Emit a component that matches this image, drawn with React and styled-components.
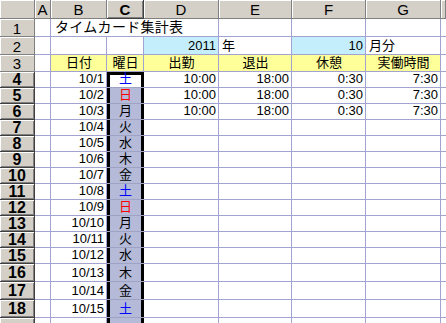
import React from "react";
import styled, { createGlobalStyle, css } from "styled-components";

const Global = createGlobalStyle`
  html, body { margin: 0; padding: 0; background: #fff; }
  body { font-family: "Liberation Sans", "Noto Sans CJK JP", sans-serif; }
`;

const GRID = "#a3a3d2";

const Sheet = styled.div`
  display: grid;
  width: 446px;
  height: 323px;
  overflow: hidden;
  grid-template-columns: 35px 16px 56px 37px 75px 73px 74px 75px 5px;
  grid-template-rows: 19px 18px 18px 17px repeat(12, 16px) repeat(3, 18px) 18px;
  background: #fff;
`;

const headBase = css`
  box-sizing: border-box;
  background: #d4d0c8;
  display: flex;
  align-items: center;
  justify-content: center;
  color: #000;
  font-family: "Liberation Sans", sans-serif;
  overflow: hidden;
`;

const Corner = styled.div`
  ${headBase};
  border-right: 1px solid #808080;
  border-bottom: 1px solid #808080;
  box-shadow: inset 1px 1px 0 #fff;
`;

const ColHead = styled.div`
  ${headBase};
  font-size: 15px;
  font-weight: ${(p) => (p.$active ? 700 : 400)};
  border-right: 1px solid ${(p) => (p.$active ? "#404040" : "#808080")};
  border-bottom: 1px solid ${(p) => (p.$active ? "#404040" : "#808080")};
  box-shadow: ${(p) =>
    p.$active
      ? "inset 1px 1px 0 #fff, inset -1px -1px 0 #808080"
      : "inset 1px 1px 0 #fff"};
  padding-top: 1px;
`;

const RowHead = styled.div`
  ${headBase};
  font-size: ${(p) => (p.$active ? "16px" : "15px")};
  font-weight: ${(p) => (p.$active ? 700 : 400)};
  border-right: 1px solid ${(p) => (p.$active ? "#404040" : "#808080")};
  border-bottom: 1px solid ${(p) => (p.$active ? "#404040" : "#808080")};
  box-shadow: ${(p) =>
    p.$active
      ? "inset 1px 1px 0 #fff, inset -1px -1px 0 #808080"
      : "inset 1px 1px 0 #fff"};
  padding-top: 1px;
`;

const Cell = styled.div`
  box-sizing: border-box;
  display: flex;
  align-items: flex-end;
  justify-content: ${(p) =>
    p.$align === "right" ? "flex-end" : p.$align === "center" ? "center" : "flex-start"};
  padding: 0 2px 1px 3px;
  font-size: 13px;
  line-height: 15px;
  color: ${(p) => p.$color || "#000"};
  background: ${(p) => p.$bg || "#fff"};
  border-right: 1px solid ${GRID};
  border-bottom: 1px solid ${GRID};
  white-space: nowrap;
  grid-column: ${(p) => (p.$span ? `span ${p.$span}` : "auto")};
  ${(p) =>
    p.$sel &&
    css`
      border-right: none;
      border-bottom: 1px solid #9ea3c4;
      background: ${p.$active ? "#fff" : "#b4bad8"};
      box-shadow: inset 3px 0 0 #000, inset -3px 0 0 #000
        ${p.$top ? ", inset 0 3px 0 #000" : ""};
      padding: 0 3px 1px;
    `}
`;

const Title = styled(Cell)`
  border-right: 1px solid ${GRID};
  font-size: 14px;
  padding-left: 4px;
  letter-spacing: 0.3px;
`;

const YELLOW = "#ffff99";
const CYAN = "#c4eefc";

const wdColor = (w) => (w === "土" ? "#0000ff" : w === "日" ? "#ff0000" : "#000");

const days = [
  ["10/1", "土", "10:00", "18:00", "0:30", "7:30"],
  ["10/2", "日", "10:00", "18:00", "0:30", "7:30"],
  ["10/3", "月", "10:00", "18:00", "0:30", "7:30"],
  ["10/4", "火"],
  ["10/5", "水"],
  ["10/6", "木"],
  ["10/7", "金"],
  ["10/8", "土"],
  ["10/9", "日"],
  ["10/10", "月"],
  ["10/11", "火"],
  ["10/12", "水"],
  ["10/13", "木"],
  ["10/14", "金"],
  ["10/15", "土"],
  ["", ""],
];

const cols = ["A", "B", "C", "D", "E", "F", "G", ""];

export default function App() {
  return (
    <>
      <Global />
      <Sheet>
        <Corner />
        {cols.map((c, i) => (
          <ColHead key={i} $active={c === "C"}>
            {c}
          </ColHead>
        ))}

        {/* Row 1 */}
        <RowHead>1</RowHead>
        <Cell />
        <Title $span={3}>タイムカード集計表</Title>
        <Cell />
        <Cell />
        <Cell />
        <Cell />

        {/* Row 2 */}
        <RowHead>2</RowHead>
        <Cell />
        <Cell />
        <Cell />
        <Cell $bg={CYAN} $align="right">2011</Cell>
        <Cell>年</Cell>
        <Cell $bg={CYAN} $align="right">10</Cell>
        <Cell>月分</Cell>
        <Cell />

        {/* Row 3 */}
        <RowHead>3</RowHead>
        <Cell />
        <Cell $bg={YELLOW} $align="center">日付</Cell>
        <Cell $bg={YELLOW} $align="center">曜日</Cell>
        <Cell $bg={YELLOW} $align="center">出勤</Cell>
        <Cell $bg={YELLOW} $align="center">退出</Cell>
        <Cell $bg={YELLOW} $align="center">休憩</Cell>
        <Cell $bg={YELLOW} $align="center">実働時間</Cell>
        <Cell />

        {days.map((d, i) => (
          <React.Fragment key={i}>
            <RowHead $active>{i < 15 ? i + 4 : ""}</RowHead>
            <Cell />
            <Cell $align="right">{d[0]}</Cell>
            <Cell $sel $top={i === 0} $active={i === 0} $align="center" $color={wdColor(d[1])}>
              {d[1]}
            </Cell>
            <Cell $align="right">{d[2] || ""}</Cell>
            <Cell $align="right">{d[3] || ""}</Cell>
            <Cell $align="right">{d[4] || ""}</Cell>
            <Cell $align="right">{d[5] || ""}</Cell>
            <Cell />
          </React.Fragment>
        ))}
      </Sheet>
    </>
  );
}
